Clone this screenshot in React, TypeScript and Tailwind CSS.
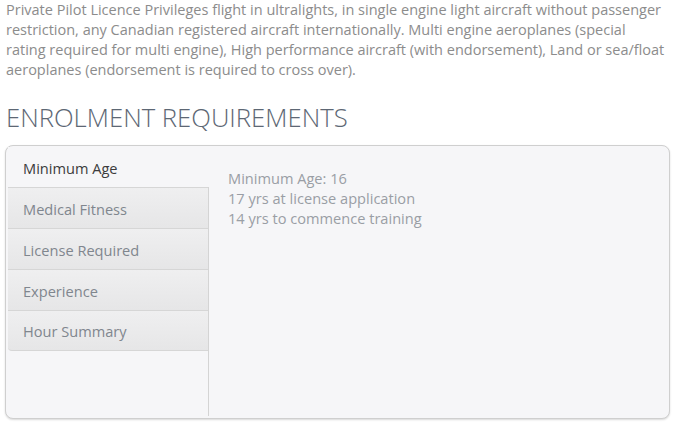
const TABS = ['Minimum Age', 'Medical Fitness', 'License Required', 'Experience', 'Hour Summary'];

const INTRO = [
  'Private Pilot Licence Privileges flight in ultralights, in single engine light aircraft without passenger',
  'restriction, any Canadian registered aircraft internationally. Multi engine aeroplanes (special',
  'rating required for multi engine), High performance aircraft (with endorsement), Land or sea/float',
  'aeroplanes (endorsement is required to cross over).',
];

export default function App() {
  const active = 0;
  return (
    <div className="w-[673px] h-[423px] bg-white px-[6px] font-['Open_Sans',sans-serif] overflow-hidden">
      <p className="text-[14.5px] leading-[20px] text-[#8c8c8c]">
        {INTRO.map(l => (
          <span key={l} className="block whitespace-nowrap">{l}</span>
        ))}
      </p>

      <h2 className="mt-[22px] text-[25.7px] leading-[32px] font-light text-[#5d6774]">
        ENROLMENT REQUIREMENTS
      </h2>

      {/* Tabs panel */}
      <div className="mt-[11px] -ml-px w-[665px] h-[274px] rounded-[8px] border border-[#cfcfcf] bg-[#f6f6f8] shadow-[0_1px_2px_rgba(0,0,0,0.15)] flex pt-[1px] pl-[2px] pb-[2px]">
        <div className="w-[201px] border-r border-[#d4d4d4] flex flex-col">
          {TABS.map((t, i) =>
            i === active ? (
              <div key={t} className="h-[40px] -mr-px bg-[#f6f6f8] flex items-center pl-[15px] pt-[3px] text-[14.6px] text-[#3c3c3c]">
                {t}
              </div>
            ) : (
              <div
                key={t}
                className={`h-[41px] bg-gradient-to-b from-[#efeff0] to-[#e6e6e7] border-t border-[#d6d6d6] flex items-center pl-[15px] pt-[3px] text-[14.6px] text-[#80868e] ${
                  i === TABS.length - 1 ? 'border-b rounded-bl-[4px]' : ''
                }`}
              >
                {t}
              </div>
            )
          )}
        </div>
        <div className="flex-1 pl-[19px] pt-[21px] text-[14.6px] leading-[20px] text-[#9a9ea5]">
          <div>Minimum Age: 16</div>
          <div>17 yrs at license application</div>
          <div>14 yrs to commence training</div>
        </div>
      </div>
    </div>
  );
}
